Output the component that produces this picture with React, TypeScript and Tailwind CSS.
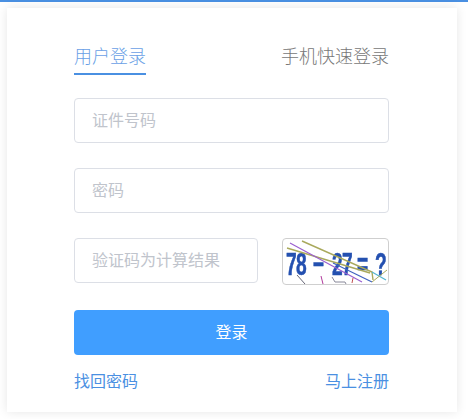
import React from 'react';

const FONT = 'font-["Liberation_Sans","Noto_Sans_CJK_SC",sans-serif]';

const inputClass =
  'block w-full h-[45px] px-[17px] border border-[#dcdfe6] rounded-[4px] bg-white text-[16px] outline-none placeholder:text-[#c0c4cc]';

// x of every captcha character (spaces too), before the 0.6 horizontal squeeze
const captchaX = [3, 13, 25, 30, 42, 49, 59, 70, 74, 88, 92].map((x) => x / 0.6).join(' ');

const Captcha: React.FC = () => (
  <svg viewBox="0 0 105 45" className="block w-full h-full">
    <text
      x={captchaX}
      y="36"
      transform="scale(0.6 1)"
      fontFamily="'Liberation Sans', sans-serif"
      fontWeight="700"
      fontSize="32"
      fill="#2450b0"
      stroke="#2450b0"
      strokeWidth="0.6"
      style={{ filter: 'blur(0.4px)' }}
    >
      78 − 27 = ?
    </text>
    <path d="M19 2 L89 33 L90 41" stroke="#a9a95c" strokeWidth="1.4" fill="none" />
    <path d="M4 9 L87 34" stroke="#a9a95c" strokeWidth="1.4" fill="none" />
    <path d="M7 4 L79 43" stroke="#9a5fd0" strokeWidth="1.2" fill="none" />
    <path d="M50 24 L89 43" stroke="#3f62c0" strokeWidth="1.2" fill="none" />
    <path d="M89 33 L103 41" stroke="#55b6d0" strokeWidth="1.2" fill="none" />
    <path d="M89 43 L104 31" stroke="#a9a95c" strokeWidth="1" fill="none" />
    <path d="M14 36 L22 45" stroke="#667" strokeWidth="1" fill="none" />
    <path d="M38 37 L40 45" stroke="#b03a9c" strokeWidth="1" fill="none" />
    <path d="M49 38 L52 43 L62 43 L63 45" stroke="#889" strokeWidth="1" fill="none" />
    <path d="M69 44 L70 39" stroke="#c05050" strokeWidth="1" fill="none" />
  </svg>
);

const App: React.FC = () => {
  return (
    <div className={`${FONT} w-[468px] h-[419px] overflow-hidden bg-white`}>
      {/* Top stripe */}
      <div className="h-[2px] bg-[#4a90e2]" />

      {/* Card */}
      <div className="mt-[6px] ml-[7px] w-[450px] h-[404px] bg-white shadow-[0_0_10px_rgba(0,0,0,0.1)] pt-[35px] pl-[67px] pr-[68px]">
        {/* Tabs */}
        <div className="flex justify-between items-start h-[55px]">
          <div className="h-[32px] border-b-2 border-[#4a90e2] text-[18px] leading-[28px] text-[#6a9fe6] font-light">用户登录</div>
          <div className="text-[18px] leading-[28px] text-[#777777] font-light">手机快速登录</div>
        </div>

        <div className="flex flex-col gap-[25px]">
          <input className={inputClass} placeholder="证件号码" />
          <input className={inputClass} placeholder="密码" />
          <div className="flex justify-between items-start h-[47px]">
            <div className="w-[184px]">
              <input className={inputClass} placeholder="验证码为计算结果" />
            </div>
            <div className="w-[107px] h-[47px] border border-[#cfcfcf] rounded-[4px] overflow-hidden">
              <Captcha />
            </div>
          </div>
        </div>

        <button className="block w-full h-[45px] mt-[25px] bg-[#409eff] rounded-[4px] text-white text-[16px]">登录</button>

        <div className="flex justify-between mt-[15px] text-[16px] leading-[24px] text-[#4a90e2]">
          <a>找回密码</a>
          <a>马上注册</a>
        </div>
      </div>
    </div>
  );
};

export default App;
